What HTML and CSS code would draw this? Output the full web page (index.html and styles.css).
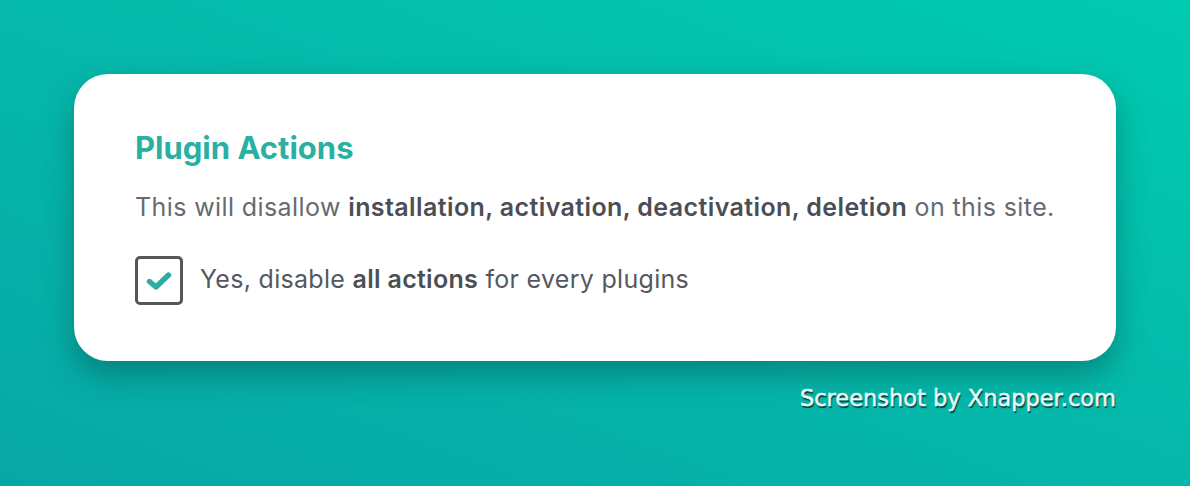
FILE: index.html
```html
<!DOCTYPE html>
<html>
<head>
<meta charset="utf-8">
<link rel="stylesheet" href="styles.css">
</head>
<body>
<main class="stage">
  <section class="card">
    <h1 class="title">Plugin Actions</h1>
    <p class="desc">This will disallow <strong>installation, activation, deactivation, deletion</strong> on this site.</p>
    <label class="option">
      <span class="checkbox">
        <svg width="28" height="22" viewBox="0 0 28 22"><path d="M4.5 11.5 L11 17 L23.5 5" fill="none" stroke="#2aaea2" stroke-width="5.4" stroke-linecap="round" stroke-linejoin="round"/></svg>
      </span>
      <span class="option-text">Yes, disable <strong>all actions</strong> for every plugins</span>
    </label>
  </section>
  <div class="credit">Screenshot by Xnapper.com</div>
</main>
</body>
</html>
```
FILE: styles.css
```css
html, body {
  margin: 0;
  padding: 0;
}
body {
  width: 1190px;
  height: 486px;
  overflow: hidden;
  background: linear-gradient(20deg, #07a7a6 0%, #05b8aa 50%, #00cbb0 100%);
  font-family: Inter, "Noto Sans", sans-serif;
}
.stage {
  padding: 74px 74px 0 74px;
  display: flex;
  flex-direction: column;
}
.card {
  background: #fff;
  border-radius: 34px;
  height: 287px;
  box-sizing: border-box;
  padding: 54px 61px 0 61px;
  box-shadow: 0 14px 30px rgba(0, 60, 60, 0.38);
  display: flex;
  flex-direction: column;
}
.title {
  margin: 0;
  font-size: 31px;
  line-height: 40px;
  font-weight: 700;
  color: #2aafa3;
}
.desc {
  margin: 23px 0 0 0;
  font-size: 25px;
  line-height: 32px;
  letter-spacing: 0.4px;
  white-space: nowrap;
  color: #676b71;
}
.desc strong, .option-text strong {
  font-weight: 600;
  color: #4b4f55;
}
.option {
  margin-top: 33px;
  display: flex;
  align-items: center;
  gap: 17px;
}
.checkbox {
  width: 48px;
  height: 49px;
  box-sizing: border-box;
  border: 3px solid #55575a;
  border-radius: 5px;
  display: flex;
  align-items: center;
  justify-content: center;
}
.option-text {
  font-size: 25px;
  line-height: 32px;
  letter-spacing: 0.3px;
  color: #55595f;
  margin-top: -4px;
}
.credit {
  align-self: flex-end;
  margin-top: 24px;
  font-family: "DejaVu Sans", sans-serif;
  font-weight: 400;
  font-size: 22.5px;
  line-height: 26px;
  color: #e6faf6;
  -webkit-text-stroke: 0.5px #e6faf6;
  text-shadow: 1px 2px 1px rgba(0, 40, 40, 0.85);
}
```
